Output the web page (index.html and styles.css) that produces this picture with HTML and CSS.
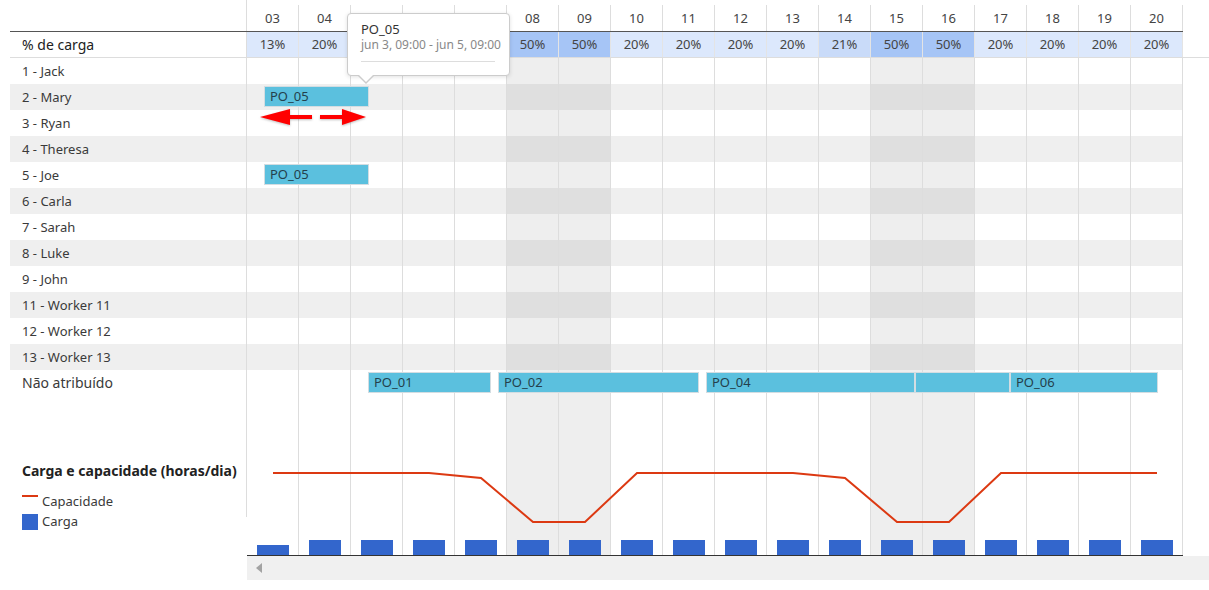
FILE: index.html
```html
<!DOCTYPE html>
<html lang="pt">
<head>
    <meta charset="UTF-8">
    <meta name="viewport" content="width=device-width, initial-scale=1.0">
    <link rel="stylesheet" href="styles.css">

    <title>Carga e capacidade</title>
</head>
<body>
    <div class="gantt">
        <div class="row days">
            <div class="label"></div>
            <div class="cells" id="days"></div>
        </div>
        <div class="row load">
            <div class="label">% de carga</div>
            <div class="cells" id="load"></div>
        </div>
        <div id="workers"></div>
        <div class="row unassigned">
            <div class="label">Não atribuído</div>
            <div class="cells" id="unassigned"></div>
        </div>
        <div class="row chart">
            <div class="label legend">
                <div class="legend-title">Carga e capacidade (horas/dia)</div>
                <div class="legend-item"><span class="mark line"></span>Capacidade</div>
                <div class="legend-item"><span class="mark box"></span>Carga</div>
            </div>
            <div class="cells" id="chart">
                <svg class="capacity" width="936" height="159" viewBox="0 0 936 159">
                    <polyline fill="none" stroke="#dc3912" stroke-width="2"
                        points="26,77 78,77 130,77 182,77 234,82 286,126 338,126 390,77 442,77 494,77 546,77 598,82 650,126 702,126 754,77 806,77 858,77 910,77" />
                </svg>
            </div>
        </div>
        <div class="row scroll">
            <div class="label"></div>
            <div class="scrollbar"><span class="scroll-left"></span></div>
        </div>

        <!-- drag hint on the selected task -->
        <svg class="drag-hint" width="112" height="20" viewBox="0 0 112 20">
            <g fill="#f00">
                <polygon points="2,9 32,1 32,7 54,7 54,11 32,11 32,17" />
                <polygon points="108,9 84,1 84,7 62,7 62,11 84,11 84,17" />
            </g>
        </svg>

        <div class="tooltip">
            <div class="tip-title">PO_05</div>
            <div class="tip-date">jun 3, 09:00 - jun 5, 09:00</div>
            <div class="tip-sep"></div>
        </div>
    </div>

    <script>
        const days = ['03', '04', '05', '06', '07', '08', '09', '10', '11', '12', '13', '14', '15', '16', '17', '18', '19', '20'];
        const weekend = ['08', '09', '15', '16'];
        const load = [13, 20, 20, 20, 21, 50, 50, 20, 20, 20, 20, 21, 50, 50, 20, 20, 20, 20];
        const workers = ['1 - Jack', '2 - Mary', '3 - Ryan', '4 - Theresa', '5 - Joe', '6 - Carla', '7 - Sarah',
            '8 - Luke', '9 - John', '11 - Worker 11', '12 - Worker 12', '13 - Worker 13'];

        // left / width in px from the first day column
        const tasks = {
            '2 - Mary': [{ name: 'PO_05', left: 17, width: 105 }],
            '5 - Joe': [{ name: 'PO_05', left: 17, width: 105 }],
            unassigned: [
                { name: 'PO_01', left: 121, width: 123 },
                { name: 'PO_02', left: 251, width: 201 },
                { name: 'PO_04', left: 459, width: 209 },
                { name: '', left: 668, width: 95 },
                { name: 'PO_06', left: 763, width: 148 }
            ]
        };

        function dayCells(container, fill) {
            days.forEach((d, i) => {
                const c = document.createElement('div');
                c.className = 'c' + (weekend.includes(d) ? ' we' : '');
                if (fill) fill(c, d, i);
                container.appendChild(c);
            });
        }

        function addTasks(container, list) {
            (list || []).forEach(t => {
                const el = document.createElement('div');
                el.className = 'task';
                el.style.left = t.left + 'px';
                el.style.width = t.width + 'px';
                el.textContent = t.name;
                container.appendChild(el);
            });
        }

        dayCells(document.getElementById('days'), (c, d) => { c.textContent = d; });

        dayCells(document.getElementById('load'), (c, d, i) => {
            c.className = 'c' + (load[i] >= 50 ? ' high' : load[i] > 20 ? ' mid' : '');
            c.textContent = load[i] + '%';
        });

        const rows = document.getElementById('workers');
        workers.forEach((w, i) => {
            const row = document.createElement('div');
            row.className = 'row worker' + (i % 2 ? ' odd' : '');
            const label = document.createElement('div');
            label.className = 'label';
            label.textContent = w;
            const cells = document.createElement('div');
            cells.className = 'cells';
            dayCells(cells);
            addTasks(cells, tasks[w]);
            row.appendChild(label);
            row.appendChild(cells);
            rows.appendChild(row);
        });

        const unassigned = document.getElementById('unassigned');
        dayCells(unassigned);
        addTasks(unassigned, tasks.unassigned);

        dayCells(document.getElementById('chart'), (c, d, i) => {
            const bar = document.createElement('div');
            bar.className = 'bar';
            bar.style.height = (i === 0 ? 10 : 15) + 'px';
            c.appendChild(bar);
        });
    </script>
</body>
</html>
```

FILE: styles.css
```css
body {
    margin: 0;
    background-color: white;
    color: #3a3a3a;
    font-family: "Noto Sans", "Liberation Sans", sans-serif;
    font-size: 13px;
}

.gantt {
    position: relative;
    margin-left: 10px;
}

.row {
    display: flex;
    width: 1173px;
    height: 26px;
}

.label {
    flex: none;
    width: 237px;
    box-sizing: border-box;
    border-right: 1px solid #ddd;
    padding: 1px 0 0 12px;
    line-height: 25px;
    white-space: nowrap;
}

.cells {
    position: relative;
    display: flex;
}

.c {
    flex: none;
    width: 52px;
    box-sizing: border-box;
    border-right: 1px solid #ddd;
    text-align: center;
    line-height: 26px;
}

.we {
    background-color: rgba(0, 0, 0, 0.065);
}

/* header */

.days {
    height: 32px;
    box-sizing: border-box;
    border-bottom: 1px solid #555;
}

.days .cells {
    padding-top: 5px;
}

.days .c {
    height: 26px;
    color: #444;
    background: none;
}

.load {
    width: 1199px;
    box-sizing: border-box;
    border-bottom: 1px solid #ddd;
}

.load .label {
    padding-top: 0;
    font-size: 14px;
    color: #222;
    line-height: 25px;
}

.load .c {
    height: 25px;
    line-height: 25px;
    background-color: #dce8fc;
    border-right-color: #e4e4e4;
    color: #444;
}

.load .c.mid {
    background-color: #c9dbf9;
}

.load .c.high {
    background-color: #a6c5f6;
}

/* rows */

.worker.odd {
    background-color: #efefef;
}

.unassigned .label {
    padding-top: 0;
    font-size: 14px;
}

.task {
    position: absolute;
    top: 2px;
    height: 21px;
    box-sizing: border-box;
    padding-left: 5px;
    background-color: #5bc0de;
    border: 1px solid #d3dde2;
    color: #24404c;
    line-height: 19px;
    white-space: nowrap;
}

/* chart */

.chart {
    height: 160px;
}

.chart .label {
    border-right: none;
    background: linear-gradient(#ddd, #ddd) right top / 1px 121px no-repeat;
    padding-top: 66px;
}

.legend-title {
    font-size: 14px;
    font-weight: bold;
    color: #222;
    line-height: 18px;
    margin-bottom: 11px;
}

.legend-item {
    display: flex;
    align-items: flex-start;
    line-height: 20px;
}

.mark {
    flex: none;
    width: 16px;
    margin-right: 4px;
}

.mark.line {
    height: 2px;
    margin-top: 4px;
    background-color: #dc3912;
}

.mark.box {
    height: 16px;
    margin-top: 3px;
    background-color: #3366cc;
}

.chart .cells {
    height: 160px;
    box-sizing: border-box;
    border-bottom: 1px solid #333;
}

.chart .c {
    display: flex;
    align-items: flex-end;
    justify-content: center;
    height: 100%;
}

.bar {
    width: 32px;
    margin-left: 1px;
    background-color: #3366cc;
}

.capacity {
    position: absolute;
    left: 0;
    top: 0;
}

/* scrollbar */

.scroll {
    width: 1199px;
    height: 24px;
}

.scroll .label {
    border-right: none;
}

.scrollbar {
    position: relative;
    flex: 1;
    background-color: #f0f0f0;
}

.scroll-left {
    position: absolute;
    left: 9px;
    top: 7px;
    border-top: 5px solid transparent;
    border-bottom: 5px solid transparent;
    border-right: 6px solid #a3a3a3;
}

/* overlays */

.drag-hint {
    position: absolute;
    left: 248px;
    top: 108px;
    filter: drop-shadow(0 1px 1px rgba(0, 0, 0, 0.25));
}

.tooltip {
    position: absolute;
    left: 337px;
    top: 13px;
    width: 163px;
    height: 63px;
    box-sizing: border-box;
    padding: 7px 14px 0 13px;
    background-color: white;
    border: 1px solid #ccc;
    border-radius: 4px;
    box-shadow: 0 1px 4px rgba(0, 0, 0, 0.12);
    white-space: nowrap;
}

.tooltip::before,
.tooltip::after {
    content: "";
    position: absolute;
    left: 10px;
    border-left: 8px solid transparent;
    border-right: 8px solid transparent;
}

.tooltip::before {
    bottom: -9px;
    border-top: 8px solid #ccc;
}

.tooltip::after {
    bottom: -7px;
    border-top: 8px solid white;
}

.tip-title {
    font-size: 13px;
    line-height: 16px;
    color: #333;
}

.tip-date {
    font-size: 12px;
    line-height: 16px;
    color: #888;
}

.tip-sep {
    height: 1px;
    margin-top: 8px;
    background-color: #ddd;
}
```
